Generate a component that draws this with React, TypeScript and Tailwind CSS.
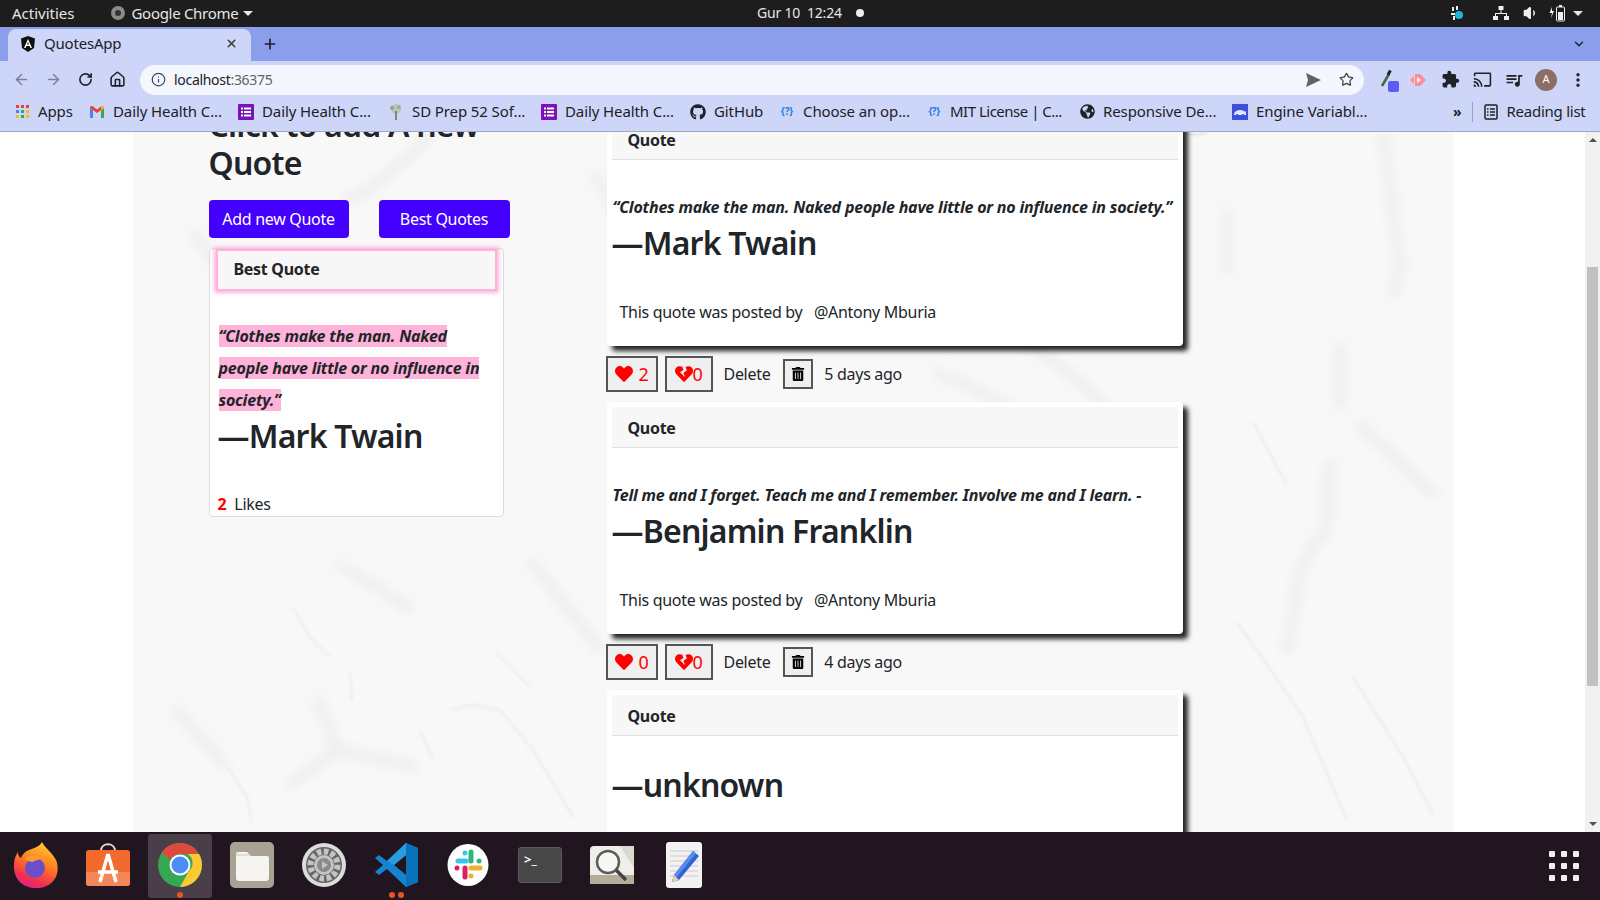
import React from 'react';
import { ArrowLeft, ArrowRight, RotateCw, Home, Info, Star, MoreVertical, Plus, X, ChevronDown, Volume1 } from 'lucide-react';
import { FaHeart, FaHeartBroken, FaTrashAlt, FaGithub, FaGlobeAmericas } from 'react-icons/fa';
import { MdExtension, MdOutlineCast, MdQueueMusic } from 'react-icons/md';

const ui = "font-['Noto_Sans','Open_Sans',sans-serif]";

const FormIcon = () => (
  <svg width="16" height="16" viewBox="0 0 16 16">
    <rect width="16" height="16" rx="1" fill="#7a12b8" />
    <rect x="3" y="3.500" width="2" height="2" fill="#fff" />
    <rect x="6" y="3.500" width="7" height="2" fill="#fff" />
    <rect x="3" y="7" width="2" height="2" fill="#fff" />
    <rect x="6" y="7" width="7" height="2" fill="#fff" />
    <rect x="3" y="10.500" width="2" height="2" fill="#fff" />
    <rect x="6" y="10.500" width="7" height="2" fill="#fff" />
  </svg>
);

const AppsIcon = () => (
  <div className="grid grid-cols-3 gap-[2px] w-[13px]">
    {['#ea4335', '#ea4335', '#ea4335', '#4285f4', '#34a853', '#fbbc04', '#fbbc04', '#34a853', '#fbbc04'].map((c, i) => (
      <span key={i} className="w-[3px] h-[3px]" style={{ background: c }} />
    ))}
  </div>
);

const GmailIcon = () => (
  <svg width="16" height="14" viewBox="0 0 16 14">
    <path d="M1 13V3l3 2.200V13z" fill="#4285f4" />
    <path d="M12 5.200 15 3v10h-3z" fill="#34a853" />
    <path d="M1 3c0-2 2-2.400 3-1.500L8 4.500l4-3c1-.9 3-.5 3 1.500L8 8z" fill="#ea4335" />
    <path d="M12 1.500c1-.9 3-.5 3 1.500l-3 2.200z" fill="#fbbc04" />
  </svg>
);

const TreeIcon = () => (
  <svg width="16" height="18" viewBox="0 0 16 18">
    <circle cx="8" cy="6" r="5" fill="#b9c6ba" />
    <circle cx="4" cy="5" r="2" fill="#8fa392" />
    <circle cx="11" cy="4" r="2" fill="#9bb09d" />
    <rect x="7" y="8" width="2" height="9" fill="#7d8a7c" />
  </svg>
);

const HelpIcon = () => (
  <span className="w-[16px] text-center text-[10px] font-bold text-[#2a7de1] whitespace-nowrap">{'{?}'}</span>
);

const CarIcon = () => (
  <svg width="16" height="16" viewBox="0 0 16 16">
    <rect width="16" height="16" fill="#3f4fd8" />
    <path d="M2 10c1-3 3-4 6-4s4 1 6 2v3H2z" fill="#dfe6ff" />
    <circle cx="5" cy="11.500" r="1.500" fill="#3f4fd8" />
    <circle cx="11" cy="11.500" r="1.500" fill="#3f4fd8" />
  </svg>
);

const ReadingIcon = () => (
  <svg width="14" height="16" viewBox="0 0 14 16" fill="none" stroke="#202124" strokeWidth="1.500">
    <rect x="1" y="1" width="12" height="14" rx="1" />
    <path d="M3 5h1.500M6 5h5M3 8h1.500M6 8h5M3 11h1.500M6 11h5" />
  </svg>
);

const bookmarks = [
  { icon: <AppsIcon />, label: 'Apps', cls: 'w-[75px]' },
  { icon: <GmailIcon />, label: 'Daily Health C...', cls: 'w-[149px]' },
  { icon: <FormIcon />, label: 'Daily Health C...', cls: 'w-[150px]' },
  { icon: <TreeIcon />, label: 'SD Prep 52 Sof...', cls: 'w-[153px]' },
  { icon: <FormIcon />, label: 'Daily Health C...', cls: 'w-[149px]' },
  { icon: <FaGithub size={16} color="#202124" />, label: 'GitHub', cls: 'w-[89px]' },
  { icon: <HelpIcon />, label: 'Choose an op...', cls: 'w-[147px]' },
  { icon: <HelpIcon />, label: 'MIT License | C...', cls: 'w-[153px] tracking-[-0.5px]' },
  { icon: <FaGlobeAmericas size={15} color="#202124" />, label: 'Responsive De...', cls: 'w-[153px]' },
  { icon: <CarIcon />, label: 'Engine Variabl...', cls: 'w-[140px]' },
];

const BrowserChrome = () => (
  <div className={`${ui} shrink-0 text-[#202124]`}>
    {/* gnome top bar */}
    <div className="h-[27px] pb-[1px] bg-[#1d1d1d] text-[#e6e6e6] text-[15px] flex items-center relative">
      <span className="ml-[12px]">Activities</span>
      <svg className="ml-[36px]" width="14" height="14" viewBox="0 0 14 14">
        <circle cx="7" cy="7" r="7" fill="#8a8a8a" />
        <circle cx="7" cy="7" r="3" fill="#333" />
      </svg>
      <span className="ml-[7px] tracking-[-0.3px]">Google Chrome</span>
      <span className="ml-[5px] w-0 h-0 border-x-[5px] border-x-transparent border-t-[5px] border-t-[#e6e6e6]" />
      <div className="absolute left-[757px] top-0 h-full flex items-center text-[14px] tracking-[-0.2px] pb-[2px]">
        <span className="whitespace-pre">Gur 10  12:24</span>
        <span className="ml-[14px] w-[8px] h-[8px] rounded-full bg-[#eee]" />
      </div>
      <div className="ml-auto flex items-center mr-[17px]">
        <svg width="14" height="16" viewBox="0 0 14 16">
          <rect x="2" y="2" width="2" height="4" fill="#eee" />
          <rect x="6" y="1" width="2" height="4" fill="#eee" />
          <rect x="1" y="8" width="4" height="2" fill="#eee" />
          <rect x="3" y="11" width="2" height="4" fill="#eee" />
          <circle cx="9" cy="10" r="4" fill="#1fb4dc" />
        </svg>
        <svg className="ml-[29px]" width="16" height="16" viewBox="0 0 16 16" fill="#eee">
          <rect x="5.500" y="1" width="5" height="4" />
          <rect x="7.500" y="5" width="1" height="4" />
          <rect x="2" y="8" width="12" height="1" />
          <rect x="2" y="8" width="1" height="3" />
          <rect x="13" y="8" width="1" height="3" />
          <rect x="0" y="11" width="5" height="4" />
          <rect x="11" y="11" width="5" height="4" />
        </svg>
        <Volume1 className="ml-[14px]" size={16} color="#eee" fill="#eee" />
        <svg className="ml-[10px]" width="16" height="18" viewBox="0 0 16 18">
          <path d="M3 3 0.500 9H3l-1 5 3-7H3z" fill="#eee" />
          <rect x="7.500" y="3" width="8" height="14" rx="1" fill="none" stroke="#eee" />
          <rect x="10" y="1" width="3" height="2" fill="#eee" />
          <rect x="9" y="8" width="5" height="8" fill="#eee" />
        </svg>
        <span className="ml-[8px] w-0 h-0 border-x-[5px] border-x-transparent border-t-[5px] border-t-[#e6e6e6]" />
      </div>
    </div>

    {/* tab strip */}
    <div className="h-[34px] bg-[#8b9eeb] flex items-end pl-[8px]">
      <div className="w-[243px] h-[32px] pb-[3px] bg-[#cdd6f8] rounded-t-[8px] flex items-center pl-[12px] pr-[13px] text-[15px] tracking-[-0.2px]">
        <svg width="16" height="16" viewBox="0 0 16 16">
          <path d="M8 0 15 2.500 14 12 8 16 2 12 1 2.500z" fill="#111" />
          <path d="M8 3 4 12h1.600l.8-2h3.200l.8 2H12zM7 8.500 8 6l1 2.500z" fill="#fff" />
        </svg>
        <span className="ml-[8px]">QuotesApp</span>
        <X className="ml-auto" size={13} strokeWidth={2.500} color="#333" />
      </div>
      <Plus className="ml-[11px] mb-[9px]" size={16} strokeWidth={2.500} />
      <ChevronDown className="ml-auto mr-[14px] mb-[10px]" size={14} strokeWidth={2.500} />
    </div>

    {/* toolbar */}
    <div className="h-[37px] bg-[#cdd6f8] flex items-center pl-[13px]">
      <ArrowLeft size={17} color="#7d8296" strokeWidth={2.200} />
      <ArrowRight className="ml-[15px]" size={17} color="#7d8296" strokeWidth={2.200} />
      <RotateCw className="ml-[16px]" size={15} strokeWidth={2.600} />
      <Home className="ml-[16px]" size={17} strokeWidth={2.200} />
      <div className="ml-[14px] w-[1224px] h-[30px] bg-[#f4f7ff] rounded-full flex items-center pl-[11px] pr-[10px]">
        <Info size={15} color="#44474f" />
        <span className="ml-[8px] text-[14px] tracking-[-0.3px]">localhost<span className="text-[#5f6368]">:36375</span></span>
        <svg className="ml-auto" width="15" height="14" viewBox="0 0 15 14">
          <path d="M0 0 15 7 0 14 2 7z" fill="#5f6368" />
        </svg>
        <Star className="ml-[18px]" size={15} strokeWidth={2} color="#444" />
      </div>
      <svg className="ml-[16px]" width="20" height="24" viewBox="0 0 20 24">
        <path d="M2 18 9 6" stroke="#3b6b3b" strokeWidth="2.500" />
        <rect x="8" y="2" width="3" height="5" fill="#222" transform="rotate(30 9 4)" />
        <rect x="8" y="13" width="11" height="11" rx="2" fill="#5a5cf5" />
      </svg>
      <svg className="ml-[10px]" width="16" height="16" viewBox="0 0 16 16">
        <path d="M5 2h5l6 6-6 6H5z" fill="#ff8c94" />
        <path d="M0 8l4-4v8z" fill="#ff8c94" />
        <path d="M7 5l4 3-4 3z" fill="#fff" />
      </svg>
      <MdExtension className="ml-[15px]" size={19} />
      <MdOutlineCast className="ml-[13px]" size={19} />
      <MdQueueMusic className="ml-[12px]" size={20} />
      <span className="ml-[11px] w-[22px] h-[22px] rounded-full bg-[#8d6e63] text-white text-[11px] flex items-center justify-center">A</span>
      <MoreVertical className="ml-[12px]" size={18} strokeWidth={2.600} />
    </div>

    {/* bookmarks */}
    <div className="h-[34px] pb-[6px] bg-[#cdd6f8] border-b border-[#a3a9bf] flex items-center pl-[14px] text-[15px] tracking-[-0.1px] whitespace-nowrap">
      {bookmarks.map((b, i) => (
        <div key={i} className={`${b.cls} flex items-center shrink-0`}>
          <span className="w-[16px] h-[18px] flex items-center justify-center shrink-0">{b.icon}</span>
          <span className="ml-[8px]">{b.label}</span>
        </div>
      ))}
      <span className="ml-[81px] font-bold text-[14px]">»</span>
      <span className="ml-[10px] w-px h-[20px] bg-[#9aa1b8]" />
      <span className="ml-[11px]"><ReadingIcon /></span>
      <span className="ml-[9px] tracking-[-0.25px]">Reading list</span>
    </div>
  </div>
);

/* faint veins of the marble backdrop, traced from the picture */
const Marble = () => (
  <svg className="absolute inset-0 w-full h-full" viewBox="0 0 1320 700" preserveAspectRatio="none" aria-hidden="true">
    <defs>
      <filter id="thin" x="-20%" y="-20%" width="140%" height="140%"><feGaussianBlur stdDeviation="1.400" /></filter>
      <filter id="soft" x="-20%" y="-20%" width="140%" height="140%"><feGaussianBlur stdDeviation="6" /></filter>
    </defs>
    <rect width="1320" height="700" fill="#f8f8f8" />
    <g filter="url(#soft)" fill="none" stroke="#ececec" strokeWidth="9">
      <path d="M1250 0 1267 134 1259 165" />
      <path d="M1094 76v67" />
      <path d="M1197 326l-3 67-27 44-13 85" />
      <path d="M1207 210v67" />
      <path d="M1224 290l80 76" />
      <path d="M397 428l73 93" />
      <path d="M204 431l76 47" />
      <path d="M154 655l50-37 80 17" />
      <path d="M184 565l20 53" />
      <path d="M40 575l54 60" />
      <path d="M880 200c40 30 90 60 120 110" />
      <path d="M960 0c30 40 60 70 90 110" />
      <path d="M300 0c-30 30-60 60-90 70" />
      <path d="M60 100c30 40 50 70 60 110" />
      <path d="M800 240c30 10 60 30 90 40" />
      <path d="M460 40c20 30 30 60 40 90" />
    </g>
    <g filter="url(#thin)" fill="none" stroke="#e6e6e6" strokeWidth="1.500">
      <path d="M1120 290l34 63" />
      <path d="M1104 491l20 27 46 67 44 103" />
      <path d="M1220 545l50 80 30 58" />
      <path d="M160 475l17 30 20 20" />
      <path d="M217 541l2 27" />
      <path d="M94 635l20 30 5 26" />
      <path d="M317 578l23-5 27 5 33 40 40 67" />
      <path d="M287 598l13 30" />
      <path d="M364 521l33 34" />
      <path d="M1045 0c10 4 20 3 30 0" stroke="#d6d6d6" />
    </g>
  </svg>
);

const Card: React.FC<{ quote?: string; author: string }> = ({ quote, author }) => (
  <div className="h-[232px] bg-white rounded-[4px] p-[5px] shadow-[5px_5px_5px_#212529]">
    <div className="h-[41px] pt-[2px] bg-[#f7f7f7] border-b border-[#dfdfdf] px-[16px] flex items-center font-bold">Quote</div>
    {quote ? (
      <p className="mt-[35px] pl-[1px] h-[24px] leading-[24px] font-bold italic whitespace-nowrap tracking-[-0.2px]">{quote}</p>
    ) : (
      <div className="mt-[30px]" />
    )}
    <h2 className="text-[32px] leading-[38px] font-semibold mt-[5px] tracking-[-0.8px]">—{author}</h2>
    <div className="mt-[38px] px-[8px] whitespace-pre">This quote was posted by   @Antony Mburia</div>
  </div>
);

const Actions: React.FC<{ likes: number; when: string }> = ({ likes, when }) => (
  <div className="h-[56px] flex items-center ml-[-1px]">
    <button className="h-[36px] w-[52px] bg-[#efefef] border-2 border-[#555] flex items-center justify-center gap-[6px] text-[#ff0000] text-[18px]">
      <FaHeart size={18} />
      {likes}
    </button>
    <button className="ml-[7px] h-[36px] w-[48px] bg-[#efefef] border-2 border-[#555] flex items-center justify-center text-[#ff0000] text-[18px]">
      <FaHeartBroken size={18} />
      0
    </button>
    <span className="ml-[11px]">Delete</span>
    <button className="ml-[13px] h-[30px] w-[30px] bg-[#efefef] border-2 border-[#555] flex items-center justify-center text-black">
      <FaTrashAlt size={14} />
    </button>
    <span className="ml-[11px]">{when}</span>
  </div>
);

const Page = () => (
  <div className="relative flex-1 min-h-0 overflow-hidden bg-white">
    <div className="flex h-full">
      <div className="flex-1 flex justify-center min-w-0">
        <div className="relative w-[1320px] h-full overflow-hidden">
          <Marble />
          <div className={`${ui} relative flex mt-[-26px] pl-[76px] text-[16px] text-[#212529] tracking-[-0.3px]`}>
            <div className="w-[295px] shrink-0">
              <h2 className="text-[32px] leading-[38.400px] font-semibold tracking-[-0.8px]">Click to add A new Quote</h2>
              <div className="mt-[17px] flex">
                <button className="h-[38px] w-[140px] shrink-0 bg-[#4400ff] rounded-[4px] text-white">Add new Quote</button>
                <button className="ml-[30px] h-[38px] w-[131px] shrink-0 bg-[#4400ff] rounded-[4px] text-white">Best Quotes</button>
              </div>
              <div className="mt-[10px] h-[269px] bg-white border border-[#dddddd] rounded-[4px] px-[5px]">
                <div className="mx-[1px] h-[42px] pb-[2px] bg-[#f7f7f7] px-[16px] flex items-center font-bold border-2 border-[#ffb3d9] shadow-[0_0_4px_2px_#ffb3d9]">Best Quote</div>
                <p className="mt-[29px] pl-[4px] pr-[4px] leading-[32px] font-bold italic tracking-[-0.2px]">
                  <span className="bg-[#ffb3d9]">“Clothes make the man. Naked people have little or no influence in society.”</span>
                </p>
                <h2 className="pl-[3px] text-[32px] leading-[38px] font-semibold mt-[1px] tracking-[-0.8px]">—Mark Twain</h2>
                <div className="pl-[3px] mt-[37px] leading-[24px]">
                  <span className="text-[#ff0000] font-bold">2</span>
                  <span className="ml-[8px]">Likes</span>
                </div>
              </div>
            </div>
            <div className="ml-[103px] w-[576px] shrink-0 mt-[8px]">
              <Card quote="“Clothes make the man. Naked people have little or no influence in society.”" author="Mark Twain" />
              <Actions likes={2} when="5 days ago" />
              <Card quote="Tell me and I forget. Teach me and I remember. Involve me and I learn. -" author="Benjamin Franklin" />
              <Actions likes={0} when="4 days ago" />
              <Card author="unknown" />
            </div>
          </div>
        </div>
      </div>
      <div className="w-[15px] shrink-0 bg-[#f1f1f1] flex flex-col items-center relative">
        <span className="mt-[6px] w-0 h-0 border-x-[4px] border-x-transparent border-b-[4px] border-b-[#505050]" />
        <div className="mt-[125px] w-[11px] h-[419px] bg-[#c1c1c1]" />
        <span className="mt-auto mb-[6px] w-0 h-0 border-x-[4px] border-x-transparent border-t-[4px] border-t-[#505050]" />
      </div>
    </div>
  </div>
);

const Firefox = () => (
  <svg width="46" height="46" viewBox="0 0 46 46">
    <defs>
      <linearGradient id="ff" x1="0.700" y1="0" x2="0.300" y2="1">
        <stop offset="0" stopColor="#ffcf2e" />
        <stop offset="0.450" stopColor="#ff7a22" />
        <stop offset="0.800" stopColor="#f0304f" />
        <stop offset="1" stopColor="#e0218a" />
      </linearGradient>
    </defs>
    <path d="M29 0c2 5 9 9 14 18 5 12-1 28-20 28C8 46 0 35 1 22c0-5 2-9 4-12 0 3 1 5 3 6 2-5 6-8 11-9 4-2 8-3 10-7z" fill="url(#ff)" />
    <circle cx="22" cy="26" r="10" fill="#6b4fc8" />
    <path d="M12 16c5-4 14-3 16 1-3 1-6 1-8 3-3 0-6-1-8-4z" fill="#ff9a2e" />
  </svg>
);

const AppStore = () => (
  <svg width="44" height="44" viewBox="0 0 44 44">
    <path d="M15 8c0-9 14-9 14 0" fill="none" stroke="#f0d6c4" strokeWidth="2" />
    <rect y="7" width="44" height="36" rx="3" fill="#f26a2e" />
    <path d="M0 29h44v11a3 3 0 0 1-3 3H3a3 3 0 0 1-3-3z" fill="#f4875a" />
    <path d="M22 11 14 39M22 11l8 28M12 29h20" stroke="#fff" strokeWidth="3.500" fill="none" />
  </svg>
);

const Chrome = () => (
  <svg width="44" height="44" viewBox="0 0 44 44">
    <circle cx="22" cy="22" r="22" fill="#34a853" />
    <path d="M22 0a22 22 0 0 1 19 11H22a11 11 0 0 0-10 6L3.500 9.500A22 22 0 0 1 22 0z" fill="#dc4a3d" />
    <path d="M41 11a22 22 0 0 1-19 33l9-16a11 11 0 0 0-1-17z" fill="#fcc934" />
    <circle cx="22" cy="22" r="10.500" fill="#fff" />
    <circle cx="22" cy="22" r="8.500" fill="#4d8bf5" />
  </svg>
);

const Files = () => (
  <svg width="44" height="46" viewBox="0 0 44 46">
    <rect width="44" height="46" rx="5" fill="#a8a292" />
    <path d="M6 15V12a2 2 0 0 1 2-2h9l4 4h16a2 2 0 0 1 2 2v20a3 3 0 0 1-3 3H9a3 3 0 0 1-3-3z" fill="#f5f4f0" />
    <path d="M6 13h14" stroke="#c9c6bb" strokeWidth="1" />
  </svg>
);

const Settings = () => (
  <svg width="44" height="46" viewBox="0 0 44 46">
    <circle cx="22" cy="23" r="22" fill="#dcdcdc" />
    <circle cx="22" cy="23" r="18" fill="#666666" />
    <circle cx="22" cy="23" r="13.500" fill="none" stroke="#c4c4c4" strokeWidth="6" strokeDasharray="4.500 2.500" />
    <circle cx="22" cy="23" r="10" fill="#c4c4c4" />
    <circle cx="22" cy="23" r="7" fill="#8a8a8a" />
    <path d="M20 19l6 4-6 4z" fill="#c4c4c4" />
  </svg>
);

const VSCode = () => (
  <svg width="43" height="44" viewBox="0 0 43 44">
    <path d="M31 0l12 5v34l-12 5L12 26 4 32 0 29l8-7-8-7 4-3 8 6zM31 12 19 22l12 10z" fill="#1384cf" />
    <path d="M31 0l12 5v34l-12 5z" fill="#0a72bb" />
    <path d="M31 0v12L19 22l-7-4z" fill="#2a9be0" />
  </svg>
);

const Slack = () => (
  <svg width="42" height="42" viewBox="0 0 42 42">
    <ellipse cx="21" cy="21" rx="20.500" ry="21" fill="#fff" />
    <g strokeWidth="5" strokeLinecap="round" fill="none">
      <path d="M11 17h8M18 9v0" stroke="#36c5f0" />
      <path d="M24 8v9M32 17v0" stroke="#2eb67d" />
      <path d="M24 24h9M24 32v0" stroke="#ecb22e" />
      <path d="M18 24v9M10 24v0" stroke="#e01e5a" />
    </g>
  </svg>
);

const Terminal = () => (
  <div className={`${ui} w-[44px] h-[36px] bg-[#474747] rounded-[3px] border border-[#5a5a5a] text-white text-[13px] leading-[14px] pl-[5px] pt-[4px] font-bold`}>
    &gt;_
  </div>
);

const Magnifier = () => (
  <svg width="44" height="38" viewBox="0 0 44 38">
    <rect width="44" height="38" rx="4" fill="#efeee8" />
    <rect y="29" width="44" height="9" fill="#b3ae99" />
    <path d="M30 0l14 22V0z" fill="#dcdad0" />
    <circle cx="18" cy="16" r="11" fill="#f7f7f5" stroke="#5c5c5c" strokeWidth="2.500" />
    <path d="M26 24l10 10" stroke="#444" strokeWidth="3.500" />
  </svg>
);

const Editor = () => (
  <svg width="36" height="46" viewBox="0 0 36 46">
    <rect width="36" height="46" rx="3" fill="#f2f2f2" />
    <path d="M4 9h28M4 14h28M4 19h28M4 24h28M4 29h28M4 34h28" stroke="#c9c9c9" />
    <path d="M27 9l6 5-20 24-7 2 2-7z" fill="#2e63d6" />
    <path d="M27 9l3 2.500L10 36l-4 4 2-7z" fill="#5b8bef" />
    <path d="M6 40l2-7 5 5z" fill="#e8cfa6" />
  </svg>
);

const dockItems = [
  { el: <Firefox /> },
  { el: <AppStore /> },
  { el: <Chrome />, active: true, dots: 1 },
  { el: <Files /> },
  { el: <Settings /> },
  { el: <VSCode />, dots: 2 },
  { el: <Slack /> },
  { el: <Terminal /> },
  { el: <Magnifier /> },
  { el: <Editor /> },
];

const Dock = () => (
  <div className="h-[68px] shrink-0 bg-[#21151f] flex items-center">
    {dockItems.map((d, i) => (
      <div key={i} className="w-[72px] h-full flex items-center justify-center relative">
        {d.active && <div className="absolute left-[4px] top-[2px] w-[64px] h-[64px] rounded-[3px] bg-[#4a3f48]" />}
        <div className="relative mt-[-2px]">{d.el}</div>
        {d.dots && (
          <div className="absolute bottom-[2px] left-0 right-0 flex justify-center gap-[3px]">
            <span className="w-[6px] h-[6px] rounded-full bg-[#e95420]" />
            {d.dots === 2 && <span className="w-[6px] h-[6px] rounded-full bg-[#e95420]" />}
          </div>
        )}
      </div>
    ))}
    <div className="ml-auto mr-[21px] grid grid-cols-3 gap-[6px]">
      {Array.from({ length: 9 }).map((_, i) => (
        <span key={i} className="w-[6px] h-[6px] rounded-[1px] bg-[#eeeeee]" />
      ))}
    </div>
  </div>
);

const App: React.FC = () => (
  <div className="w-[1600px] h-[900px] flex flex-col overflow-hidden">
    <BrowserChrome />
    <Page />
    <Dock />
  </div>
);

export default App;
